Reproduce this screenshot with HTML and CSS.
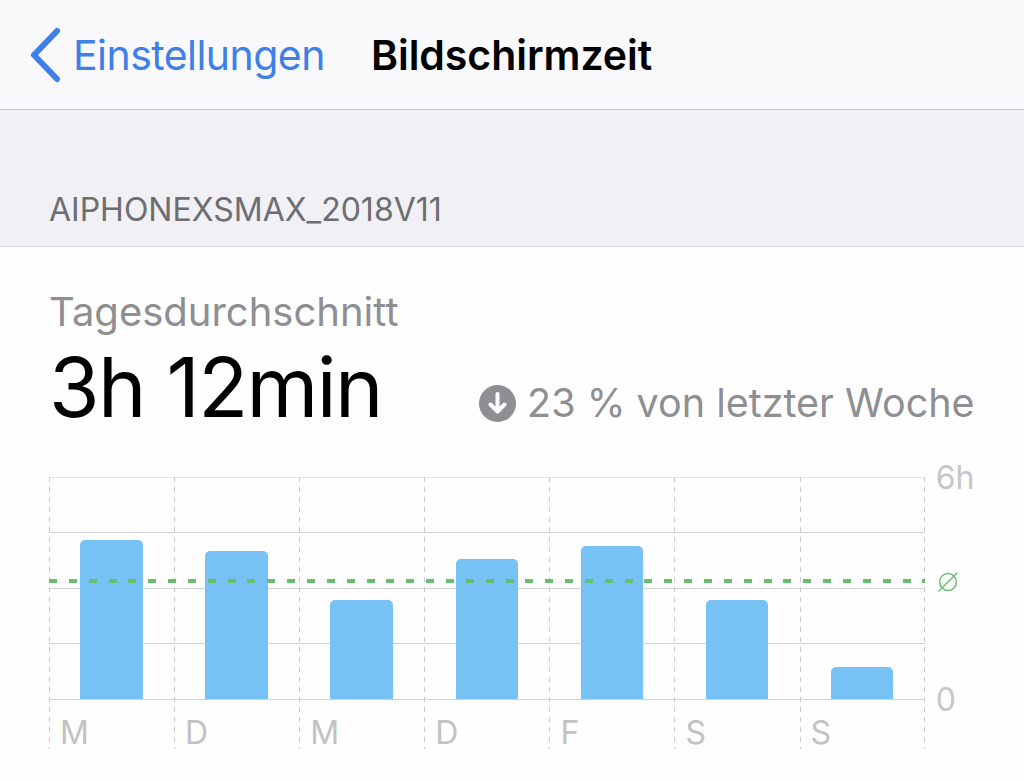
FILE: index.html
```html
<!DOCTYPE html>
<html lang="de">
<head>
    <meta charset="UTF-8">
    <meta name="viewport" content="width=device-width, initial-scale=1.0">
    <title>Bildschirmzeit</title>
    <link rel="stylesheet" href="styles.css">
</head>
<body>
    <div class="navbar">
        <svg class="back-icon" width="32" height="56" viewBox="0 0 32 56">
            <path d="M27 4 L4 28 L27 52" fill="none" stroke="#3f7fe8" stroke-width="6" stroke-linecap="round" stroke-linejoin="round"/>
        </svg>
        <span class="back-label">Einstellungen</span>
        <span class="nav-title">Bildschirmzeit</span>
    </div>

    <div class="section-head">
        <span>AIPHONEXSMAX_2018V11</span>
    </div>

    <div class="card">
        <div class="avg-label">Tagesdurchschnitt</div>
        <div class="summary">
            <span class="avg-time">3h 12min</span>
            <span class="change">
                <svg class="change-icon" width="37" height="37" viewBox="0 0 37 37">
                    <circle cx="18.5" cy="18.5" r="18.5" fill="#8e8e93"/>
                    <path d="M18.5 9 V26 M11.5 19.5 L18.5 26.5 L25.5 19.5" fill="none" stroke="#fff" stroke-width="4" stroke-linecap="round" stroke-linejoin="round"/>
                </svg>
                23 % von letzter Woche
            </span>
        </div>

        <div class="chart-row">
            <div class="chart">
                <div class="hlines">
                    <div></div>
                    <div></div>
                    <div></div>
                    <div></div>
                </div>
                <div class="days">
                    <div class="day"><div class="bar-area"><div class="bar" style="height: 159px"></div></div><span class="day-label">M</span></div>
                    <div class="day"><div class="bar-area"><div class="bar" style="height: 148px"></div></div><span class="day-label">D</span></div>
                    <div class="day"><div class="bar-area"><div class="bar" style="height: 99px"></div></div><span class="day-label">M</span></div>
                    <div class="day"><div class="bar-area"><div class="bar" style="height: 140px"></div></div><span class="day-label">D</span></div>
                    <div class="day"><div class="bar-area"><div class="bar" style="height: 153px"></div></div><span class="day-label">F</span></div>
                    <div class="day"><div class="bar-area"><div class="bar" style="height: 99px"></div></div><span class="day-label">S</span></div>
                    <div class="day last"><div class="bar-area"><div class="bar" style="height: 32px"></div></div><span class="day-label">S</span></div>
                </div>
                <div class="avg-line"></div>
            </div>
            <div class="axis">
                <span class="axis-top">6h</span>
                <svg class="avg-icon" width="22" height="22" viewBox="0 0 22 22">
                    <circle cx="11" cy="11" r="8.4" fill="none" stroke="#6cc070" stroke-width="1.5"/>
                    <path d="M2 20 L20 2" fill="none" stroke="#6cc070" stroke-width="1.5" stroke-linecap="round"/>
                </svg>
                <span class="axis-bottom">0</span>
            </div>
        </div>
    </div>
</body>
</html>
```

FILE: styles.css
```css
body {
    margin: 0;
    height: 781px;
    overflow: hidden;
    background-color: #fefefe;
    font-family: Inter, "Noto Sans", sans-serif;
}

.navbar {
    display: flex;
    align-items: center;
    height: 109px;
    padding-left: 30px;
    background-color: #f9f9fb;
    border-bottom: 1px solid #c6c6ca;
}
.back-icon {
    margin-right: 11px;
}
.back-label {
    width: 298px;
    font-size: 41px;
    letter-spacing: -0.55px;
    color: #3f7fe8;
}
.nav-title {
    font-size: 41px;
    font-weight: 600;
    letter-spacing: -0.05px;
    color: #000;
}

.section-head {
    display: flex;
    align-items: flex-end;
    box-sizing: border-box;
    height: 137px;
    padding: 0 0 18px 49px;
    background-color: #f0f0f5;
    border-bottom: 1px solid #dcdce0;
    font-size: 32px;
    line-height: 36px;
    letter-spacing: 0;
    color: #6d6d72;
}

.card {
    padding: 42px 0 0 49px;
}
.avg-label {
    font-size: 40px;
    line-height: 46px;
    color: #8e8e93;
}
.summary {
    display: flex;
    align-items: baseline;
    margin-top: 6px;
    height: 94px;
}
.avg-time {
    width: 430px;
    font-size: 82px;
    line-height: 94px;
    letter-spacing: -1.6px;
    color: #000;
}
.change {
    font-size: 39.5px;
    color: #8e8e93;
}
.change-icon {
    vertical-align: -5px;
}

.chart-row {
    display: flex;
    margin-top: 42px;
}
.chart {
    position: relative;
    width: 875.7px;
    height: 272px;
}
.hlines {
    position: absolute;
    top: 0;
    left: 0;
    right: 0;
    height: 222.6px;
    display: flex;
    flex-direction: column;
    box-sizing: border-box;
    border-bottom: 1px solid #d3d1da;
}
.hlines div {
    flex: 1;
    border-top: 1px solid #d3d1da;
}
.hlines div:first-child {
    border-top-color: #e2e2e4;
}

.days {
    position: relative;
    display: flex;
    height: 100%;
}
.day {
    flex: 1;
    background-image: repeating-linear-gradient(to bottom, #c9c9cd 0, #c9c9cd 5px, transparent 5px, transparent 10px);
    background-size: 1px 100%;
    background-repeat: no-repeat;
}
.day.last {
    background-image:
        repeating-linear-gradient(to bottom, #c9c9cd 0, #c9c9cd 5px, transparent 5px, transparent 10px),
        repeating-linear-gradient(to bottom, #c9c9cd 0, #c9c9cd 5px, transparent 5px, transparent 10px);
    background-position: left top, right top;
}
.bar-area {
    display: flex;
    align-items: flex-end;
    justify-content: center;
    height: 222px;
}
.bar {
    width: 62.5px;
    background-color: #76c2f5;
    border-radius: 5px 5px 0 0;
}
.day-label {
    display: block;
    padding: 17px 0 0 11px;
    font-size: 32px;
    line-height: 34px;
    color: #c2c2c5;
}
.avg-line {
    position: absolute;
    top: 102px;
    left: 0;
    right: 0;
    height: 4px;
    background-image: repeating-linear-gradient(to right, #66bf6d 0, #66bf6d 8px, transparent 8px, transparent 19.85px);
}

.axis {
    display: flex;
    flex-direction: column;
    align-items: flex-start;
    width: 60px;
    margin-top: -14px;
    padding-left: 11px;
    font-size: 32px;
    line-height: 30px;
    color: #c6c6c9;
}
.axis-top {
    height: 30px;
}
.avg-icon {
    margin: 78px 0 0 1px;
}
.axis-bottom {
    margin-top: 92px;
}
```
